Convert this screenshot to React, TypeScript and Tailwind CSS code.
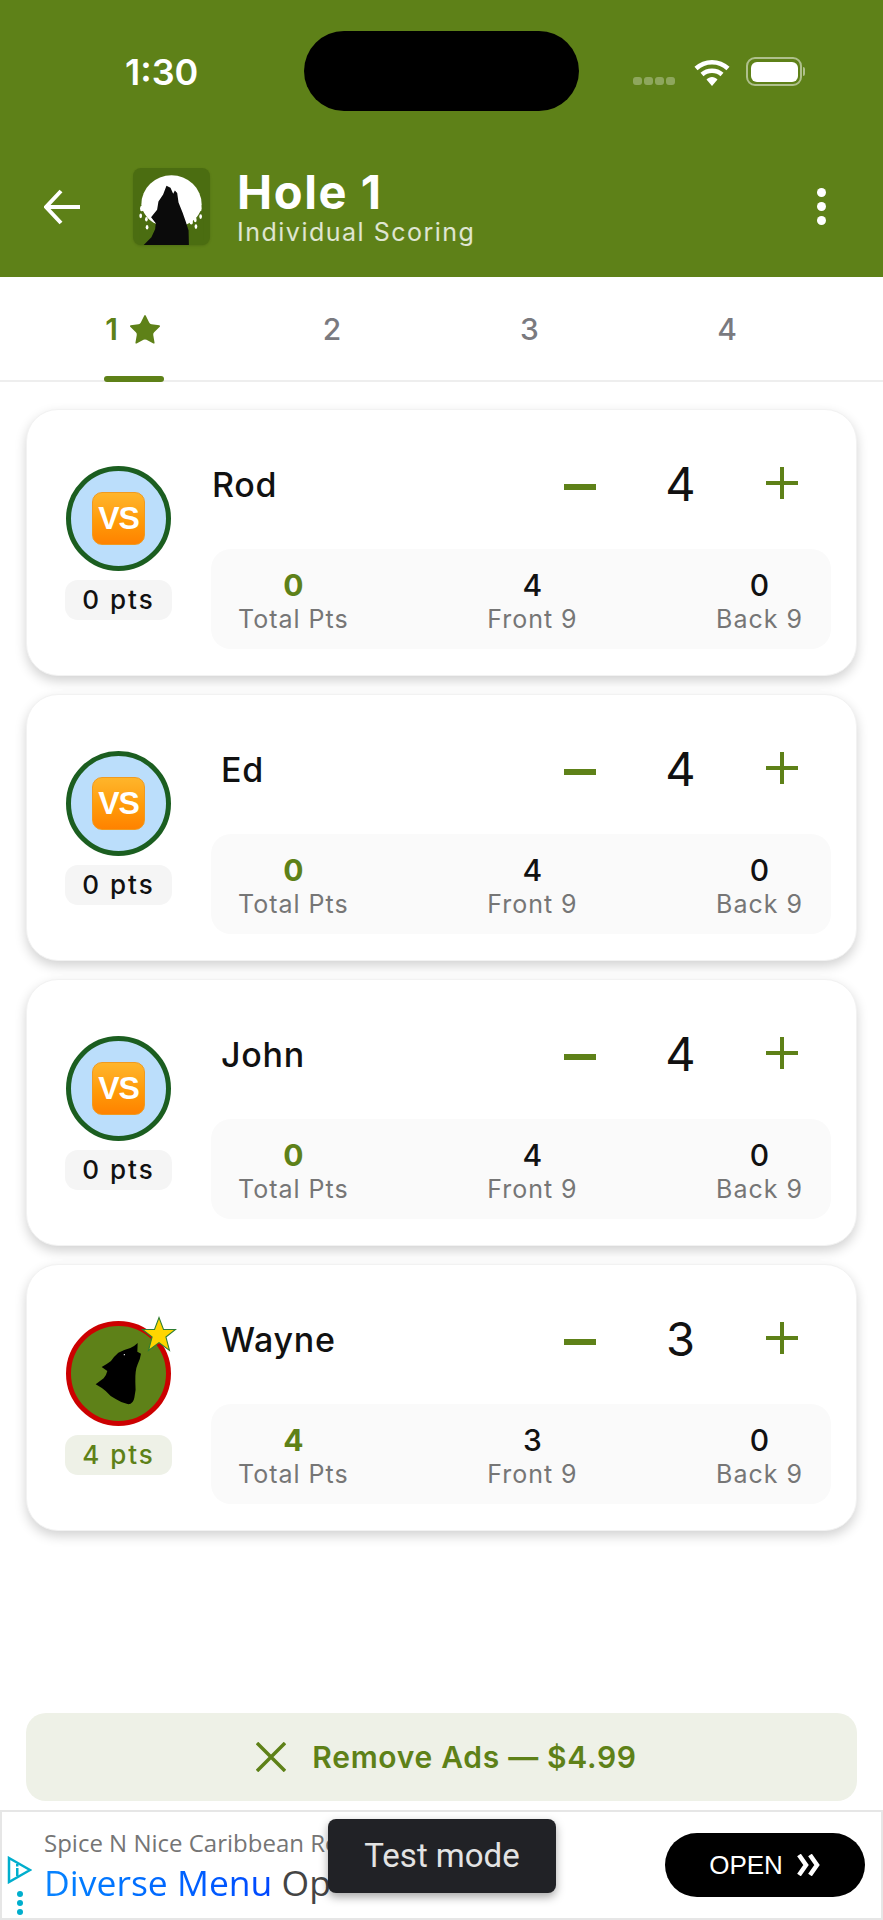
import { Star } from "lucide-react";

const GREEN = "text-[#5e8118]";

const players = [
  { name: "Rod", nameClass: "pl-[1px]", score: 4, pts: 0, front: 4, back: 0, wolf: false },
  { name: "Ed", nameClass: "pl-[10px]", score: 4, pts: 0, front: 4, back: 0, wolf: false },
  { name: "John", nameClass: "pl-[10px]", score: 4, pts: 0, front: 4, back: 0, wolf: false },
  { name: "Wayne", nameClass: "pl-[10px]", score: 3, pts: 4, front: 3, back: 0, wolf: true },
];

function Wifi() {
  return (
    <svg width="36" height="28" viewBox="0 0 36 28" fill="none">
      <path d="M2 10.5C11 2 25 2 34 10.5" stroke="white" strokeWidth="4.5" />
      <path d="M8 16.5C13.5 11.5 22.5 11.5 28 16.5" stroke="white" strokeWidth="4.5" />
      <path d="M12.5 21.5C15.5 18 20.5 18 23.5 21.5L18 28Z" fill="white" />
    </svg>
  );
}

function Battery() {
  return (
    <div className="flex items-center">
      <div className="flex h-[29px] w-[56px] items-center justify-center rounded-[9px] border-2 border-white/50">
        <div className="h-[20px] w-[47px] rounded-[6px] bg-white" />
      </div>
      <div className="ml-[1px] h-[9px] w-[2px] rounded-r-sm bg-white/50" />
    </div>
  );
}

function Logo() {
  return (
    <div className="h-[77px] w-[77px] overflow-hidden rounded-[8px] bg-[#4b6d11] shadow-sm">
      <svg width="77" height="77" viewBox="40 25 230 230">
        <ellipse cx="155" cy="133" rx="90" ry="86" fill="white" />
        <path d="M60 125L60 240L250 240L250 125C240 175 215 200 155 200C95 200 72 170 60 125Z" fill="#4b6d11" />
        <g fill="white">
          <ellipse cx="72" cy="122" rx="5" ry="8" />
          <ellipse cx="66" cy="146" rx="5" ry="8" />
          <ellipse cx="85" cy="154" rx="5" ry="8" />
          <ellipse cx="63" cy="168" rx="4" ry="7" />
          <ellipse cx="80" cy="178" rx="4" ry="7" />
          <ellipse cx="82" cy="202" rx="4" ry="7" />
          <ellipse cx="234" cy="124" rx="5" ry="8" />
          <ellipse cx="241" cy="146" rx="4" ry="8" />
          <ellipse cx="222" cy="152" rx="5" ry="8" />
          <ellipse cx="242" cy="170" rx="4" ry="7" />
          <ellipse cx="226" cy="180" rx="4" ry="7" />
          <ellipse cx="214" cy="186" rx="5" ry="8" />
          <ellipse cx="228" cy="200" rx="4" ry="7" />
        </g>
        <path
          d="M72 255L95 232L106 208L108 190L94 172L112 150L116 125L130 104L140 78L152 84L160 102L165 92L172 100L176 128L188 158L198 186L206 212L207 255Z"
          fill="#0b0b0b"
        />
      </svg>
    </div>
  );
}

function VsEmoji() {
  return (
    <div className="flex h-[53px] w-[53px] items-center justify-center rounded-[10px] border border-[#f09a20] bg-gradient-to-b from-[#ffb52a] via-[#ff9d0a] to-[#ff8200]">
      <span className="font-['Liberation_Sans',sans-serif] text-[32px] font-bold leading-none tracking-[-1px] text-white">VS</span>
    </div>
  );
}

function Avatar({ wolf }: { wolf: boolean }) {
  if (wolf) {
    return (
      <div className="relative h-[105px] w-[105px]">
        <div className="h-full w-full overflow-hidden rounded-full border-[5px] border-[#cc0000] bg-[#5e8118]" />
        <svg className="absolute inset-0" width="105" height="105" viewBox="33 42 315 315">
          <path
            d="M248 108Q238 118 226 123Q205 129 190 137Q175 150 168 162Q155 172 140 180L157 192Q154 205 146 214L122 232Q140 242 152 252Q165 268 182 276Q200 288 220 292Q235 290 238 272Q244 250 241 225Q240 190 248 172Q256 155 258 140L247 134Z"
            fill="black"
          />
          <circle cx="208" cy="143" r="2" fill="white" />
        </svg>
        <svg className="absolute left-[75px] top-[-5px]" width="36" height="36" viewBox="0 0 24 24">
          <path
            d="M12 1L15 9H23L16.6 14L19 23L12 17.8L5 23L7.4 14L1 9H9Z"
            fill="#ffd600"
            stroke="#2e7d32"
            strokeWidth="0.7"
          />
        </svg>
      </div>
    );
  }
  return (
    <div className="flex h-[105px] w-[105px] items-center justify-center rounded-full border-[5px] border-[#1b5e20] bg-[#bbdefb]">
      <VsEmoji />
    </div>
  );
}

function Stat({ value, label, green }: { value: number; label: string; green?: boolean }) {
  return (
    <div className="flex flex-col items-center pt-[2px]">
      <span className={"text-[30px] leading-[36px] " + (green ? "font-bold " + GREEN : "font-medium text-[#111]")}>{value}</span>
      <span className="mt-[2px] text-[25px] leading-[28px] tracking-[1px] text-[#767676]">{label}</span>
    </div>
  );
}

function Minus() {
  return <div className="mt-[8px] h-[6px] w-[32px] bg-[#5e8118]" />;
}

function Plus() {
  return (
    <svg width="32" height="32" viewBox="0 0 32 32">
      <rect x="0" y="14" width="32" height="4" fill="#5e8118" />
      <rect x="14" y="0" width="4" height="32" fill="#5e8118" />
    </svg>
  );
}

function PlayerCard({ player }: { player: (typeof players)[number] }) {
  const earned = player.pts > 0;
  return (
    <div className="flex h-[267px] items-center rounded-[32px] border border-[#f2f2f2] bg-white pl-[38px] pr-[25px] shadow-[0_5px_12px_rgba(0,0,0,0.18)]">
      <div className="flex w-[107px] flex-col items-center">
        <Avatar wolf={player.wolf} />
        <div
          className={
            "mt-[9px] flex h-[40px] w-[107px] items-center justify-center rounded-[13px] text-[26px] font-medium tracking-[2px] " +
            (earned ? "bg-[#eef1e7] " + GREEN : "bg-[#f5f5f5] text-[#111]")
          }
        >
          {player.pts} pts
        </div>
      </div>
      <div className="ml-[39px] flex-1">
        <div className="flex h-[94px] items-center">
          <span className={"flex-1 pt-[3px] text-[34px] font-medium tracking-[0.7px] text-[#111] " + player.nameClass}>{player.name}</span>
          <div className="flex w-[101px] translate-x-[1px] justify-center">
            <Minus />
          </div>
          <div className="flex w-[101px] translate-x-[1px] justify-center text-[47px] leading-none text-[#111]">{player.score}</div>
          <div className="flex w-[101px] translate-x-[1px] justify-center">
            <Plus />
          </div>
        </div>
        <div className="mt-[19px] flex h-[100px] items-center justify-between rounded-[20px] bg-[#fafafa] pl-[27px] pr-[28px]">
          <Stat value={player.pts} label="Total Pts" green />
          <Stat value={player.front} label="Front 9" />
          <Stat value={player.back} label="Back 9" />
        </div>
      </div>
    </div>
  );
}

function AdBar() {
  return (
    <div className="relative flex h-[110px] items-center border-2 border-[#e6e6e6] bg-white">
      <div className="w-[42px] self-start pl-[5px] pt-[44px]">
        <div className="flex w-[25px] flex-col items-center">
          <svg width="25" height="28" viewBox="0 0 25 28" fill="none">
            <path d="M2 2L23 14L2 26Z" stroke="#00aecd" strokeWidth="2.5" />
            <rect x="9" y="12" width="2.5" height="8" fill="#00aecd" />
            <rect x="9" y="8" width="2.5" height="2.5" fill="#00aecd" />
          </svg>
          <div className="mt-[7px] flex flex-col gap-[3px]">
            <div className="h-[6px] w-[6px] rounded-full bg-[#00aecd]" />
            <div className="h-[6px] w-[6px] rounded-full bg-[#00aecd]" />
            <div className="h-[6px] w-[6px] rounded-full bg-[#00aecd]" />
          </div>
        </div>
      </div>
      <div className="w-[290px] overflow-hidden whitespace-nowrap font-['Open_Sans',sans-serif]">
        <div className="text-[24px] leading-[34px] text-[#757575]">Spice N Nice Caribbean Restaurant</div>
        <div className="text-[35.5px] leading-[44px] text-[#444]">
          <span className="bg-gradient-to-r from-[#0a84ff] to-[#0047ff] bg-clip-text text-transparent">Diverse Menu</span> Options
        </div>
      </div>
      <div className="absolute left-[326px] top-[7px] flex h-[74px] w-[228px] items-center justify-center rounded-[8px] bg-[#212226] font-['Roboto',sans-serif] text-[33px] text-[#e3e3e3] shadow-[0_4px_10px_rgba(0,0,0,0.35)]">
        Test mode
      </div>
      <div className="absolute left-[663px] top-[21px] flex h-[64px] w-[200px] items-center justify-center gap-[14px] rounded-full bg-black font-['Liberation_Sans',sans-serif] text-[26px] text-white">
        OPEN
        <svg width="24" height="22" viewBox="0 0 24 22" fill="none">
          <path d="M2 1L9 11L2 21M13 1L20 11L13 21" stroke="white" strokeWidth="4.5" />
        </svg>
      </div>
    </div>
  );
}

export default function App() {
  return (
    <div className="flex h-[1920px] w-[883px] flex-col overflow-hidden bg-white font-['Inter',sans-serif]">
      {/* header */}
      <div className="h-[277px] bg-[#5e8118]">
        <div className="relative flex h-[168px] items-start">
          <span className="ml-[125px] mt-[49px] text-[36px] font-semibold leading-[46px] text-white">1:30</span>
          <div className="absolute left-[304px] top-[31px] h-[80px] w-[275px] rounded-[40px] bg-black" />
          <div className="ml-auto mr-[78px] mt-[57px] flex items-center">
            <div className="mr-[19px] mt-[18px] flex gap-[2px]">
              <div className="h-[8px] w-[9px] rounded-[3px] bg-white/30" />
              <div className="h-[8px] w-[9px] rounded-[3px] bg-white/30" />
              <div className="h-[8px] w-[9px] rounded-[3px] bg-white/30" />
              <div className="h-[8px] w-[9px] rounded-[3px] bg-white/30" />
            </div>
            <Wifi />
            <div className="ml-[16px]">
              <Battery />
            </div>
          </div>
        </div>
        <div className="flex h-[77px] items-center">
          <svg className="ml-[44px]" width="36" height="36" viewBox="0 0 36 36" fill="none">
            <path d="M17 2L2 18L17 34M2 18H36" stroke="white" strokeWidth="4" />
          </svg>
          <div className="ml-[53px]">
            <Logo />
          </div>
          <div className="ml-[27px] flex flex-col">
            <span className="text-[47px] font-bold leading-[50px] tracking-[1.6px] text-white">Hole 1</span>
            <span className="text-[25px] leading-[30px] tracking-[1.5px] text-white/80">Individual Scoring</span>
          </div>
          <div className="ml-auto mr-[57px] flex flex-col gap-[5px]">
            <div className="h-[9px] w-[9px] rounded-full bg-white" />
            <div className="h-[9px] w-[9px] rounded-full bg-white" />
            <div className="h-[9px] w-[9px] rounded-full bg-white" />
          </div>
        </div>
      </div>

      {/* hole tabs */}
      <div className="flex h-[105px] border-b-2 border-[#eeeeee] pl-[35px] text-[30px] font-medium text-[#7a7a7f]">
        <div className={"relative flex w-[198px] items-center justify-center gap-[9px] pt-[2px] font-semibold " + GREEN}>
          1
          <Star size={36} fill="#5e8118" strokeWidth={0} />
          <div className="absolute bottom-[-2px] left-[69px] h-[6px] w-[60px] rounded-[3px] bg-[#5e8118]" />
        </div>
        <div className="flex w-[198px] items-center justify-center pt-[2px]">2</div>
        <div className="flex w-[197px] items-center justify-center pt-[2px]">3</div>
        <div className="flex w-[198px] items-center justify-center pt-[2px]">4</div>
      </div>

      <div className="flex flex-1 flex-col gap-[18px] px-[26px] pt-[27px]">
        {players.map((player) => (
          <PlayerCard key={player.name} player={player} />
        ))}
      </div>

      <div className="mx-[26px] mb-[9px] flex h-[88px] items-center justify-center gap-[26px] rounded-[20px] bg-[#eef1e7] pl-[10px] text-[30px] font-semibold tracking-[0.7px] text-[#5e8118]">
        <svg width="30" height="30" viewBox="0 0 30 30" fill="none">
          <path d="M1 1L29 29M29 1L1 29" stroke="#5e8118" strokeWidth="3.5" />
        </svg>
        Remove Ads — $4.99
      </div>

      <AdBar />
    </div>
  );
}
